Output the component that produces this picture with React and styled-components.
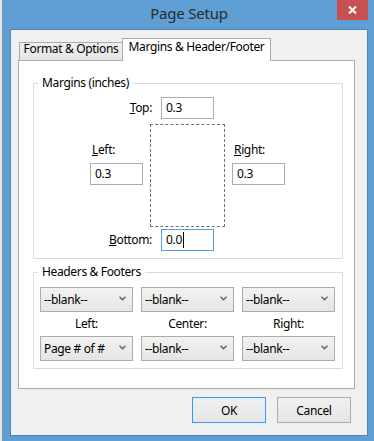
import React from "react";
import styled, { createGlobalStyle } from "styled-components";

const GlobalStyle = createGlobalStyle`
  html, body { margin: 0; padding: 0; }
  body {
    width: 374px;
    height: 441px;
    overflow: hidden;
    font-family: "Noto Sans", "DejaVu Sans", sans-serif;
    font-size: 12px;
    letter-spacing: -0.35px;
    color: #000;
  }
  *, *::before, *::after { box-sizing: border-box; }
`;

const Desktop = styled.div`
  display: flex;
  width: 374px;
  height: 441px;
  padding-left: 2px;
  background: #e4e4e4;
`;

const Window = styled.div`
  flex: 1;
  display: flex;
  flex-direction: column;
  background: #5f9fd3;
  border-left: 1px solid #7d9bb6;
  padding: 0 6px 5px 7px;
`;

const TitleBar = styled.div`
  height: 29px;
  display: grid;
  grid-template-columns: 1fr auto 1fr;
  align-items: start;
`;

const Title = styled.div`
  grid-column: 2;
  padding-top: 3px;
  font-size: 15px;
  line-height: 20px;
  letter-spacing: -0.2px;
  color: #2b2b2b;
`;

const CloseButton = styled.div`
  grid-column: 3;
  justify-self: end;
  width: 31px;
  height: 20px;
  background: #c75050;
  display: flex;
  align-items: center;
  justify-content: center;
`;

const Client = styled.div`
  flex: 1;
  display: flex;
  flex-direction: column;
  background: #f0f0f0;
  border: 1px solid #4f86b6;
  padding: 8px 12px 12px 7px;
`;

const TabStrip = styled.div`
  display: flex;
  align-items: flex-end;
  height: 22px;
  padding-left: 1px;
`;

const Tab = styled.div`
  position: relative;
  text-align: center;
  white-space: nowrap;
  line-height: 12px;
  border: 1px solid #acacac;
  border-bottom: none;
  width: ${(p) => (p.$active ? "149px" : "104px")};
  height: ${(p) => (p.$active ? "23px" : "18px")};
  padding-top: ${(p) => (p.$active ? "2px" : "0")};
  margin-left: ${(p) => (p.$active ? "-1px" : "0")};
  margin-bottom: ${(p) => (p.$active ? "-1px" : "0")};
  background: ${(p) => (p.$active ? "#fff" : "linear-gradient(#f0f0f0, #e5e5e5)")};
  z-index: ${(p) => (p.$active ? 1 : 0)};
`;

const Panel = styled.div`
  width: 337px;
  height: 329px;
  background: #fff;
  border: 1px solid #acacac;
  padding: 14px 11px 0 14px;
  display: flex;
  flex-direction: column;
  gap: 5px;
`;

const Group = styled.fieldset`
  margin: 0;
  padding: 0 0 7px 0;
  min-width: 0;
  border: 1px solid #dcdcdc;
`;

const Legend = styled.legend`
  margin-left: 4px;
  padding: 0 4px;
  line-height: 16px;
`;

const FieldRow = styled.div`
  display: flex;
  align-items: center;
  padding-left: 56px;
  margin-top: ${(p) => p.$top}px;
`;

const RowLabel = styled.div`
  width: 62px;
  margin-right: 9px;
  text-align: right;
  line-height: 16px;
`;

const TextBox = styled.div`
  width: 53px;
  height: 22px;
  background: #fff;
  border: 1px solid ${(p) => (p.$focused ? "#569de5" : "#abadb3")};
  padding-left: 4px;
  line-height: 20px;
  display: flex;
  align-items: center;
`;

const Caret = styled.span`
  display: inline-block;
  width: 1px;
  height: 16px;
  background: #000;
  margin-left: 1px;
`;

const PreviewRow = styled.div`
  display: flex;
  gap: 7px;
  padding-left: 56px;
  margin-top: 5px;
`;

const SideCol = styled.div`
  display: flex;
  flex-direction: column;
  gap: 5px;
  padding-top: 18px;
`;

const SideLabel = styled.div`
  padding-left: 2px;
  line-height: 16px;
`;

const PagePreview = styled.div`
  width: 75px;
  height: 103px;
  border: 1px dashed #707070;
`;

const ComboGrid = styled.div`
  display: grid;
  grid-template-columns: repeat(3, 93px);
  grid-template-rows: 25px 24px 25px;
  column-gap: 8px;
  padding: 7px 0 0 6px;
`;

const Combo = styled.div`
  display: flex;
  align-items: center;
  justify-content: space-between;
  border: 1px solid #acacac;
  background: linear-gradient(#f2f2f2, #e5e5e5);
  padding: 0 6px 0 3px;
  white-space: nowrap;
`;

const Chevron = styled.svg`
  display: block;
  margin-bottom: 3px;
`;

const ColLabel = styled.div`
  align-self: center;
  text-align: center;
  line-height: 16px;
`;

const Footer = styled.div`
  display: flex;
  justify-content: flex-end;
  gap: 11px;
  margin-top: 8px;
  padding-right: 4px;
`;

const Button = styled.div`
  width: 74px;
  height: 26px;
  display: flex;
  align-items: center;
  justify-content: center;
  border: 1px solid ${(p) => (p.$default ? "#3399ff" : "#acacac")};
  background: linear-gradient(#f0f0f0, #e5e5e5);
`;

function ComboBox({ value }) {
  return (
    <Combo>
      <span>{value}</span>
      <Chevron width="7" height="5" viewBox="0 0 7 5">
        <polyline points="0.5,0.8 3.5,3.8 6.5,0.8" fill="none" stroke="#606060" strokeWidth="1.4" />
      </Chevron>
    </Combo>
  );
}

export default function App() {
  return (
    <>
      <GlobalStyle />
      <Desktop>
        <Window>
          <TitleBar>
            <Title>Page Setup</Title>
            <CloseButton>
              <svg width="9" height="8" viewBox="0 0 9 8">
                <path d="M1 0.5 L8 7.5 M8 0.5 L1 7.5" stroke="#fff" strokeWidth="2" />
              </svg>
            </CloseButton>
          </TitleBar>
          <Client>
            <TabStrip>
              <Tab>Format &amp; Options</Tab>
              <Tab $active>Margins &amp; Header/Footer</Tab>
            </TabStrip>
            <Panel>
              <Group>
                <Legend>Margins (inches)</Legend>
                <FieldRow $top={6}>
                  <RowLabel><u>T</u>op:</RowLabel>
                  <TextBox>0.3</TextBox>
                </FieldRow>
                <PreviewRow>
                  <SideCol>
                    <SideLabel><u>L</u>eft:</SideLabel>
                    <TextBox>0.3</TextBox>
                  </SideCol>
                  <PagePreview />
                  <SideCol>
                    <SideLabel><u>R</u>ight:</SideLabel>
                    <TextBox>0.3</TextBox>
                  </SideCol>
                </PreviewRow>
                <FieldRow $top={2}>
                  <RowLabel><u>B</u>ottom:</RowLabel>
                  <TextBox $focused>0.0<Caret /></TextBox>
                </FieldRow>
              </Group>
              <Group>
                <Legend>Headers &amp; Footers</Legend>
                <ComboGrid>
                  <ComboBox value="--blank--" />
                  <ComboBox value="--blank--" />
                  <ComboBox value="--blank--" />
                  <ColLabel>Left:</ColLabel>
                  <ColLabel>Center:</ColLabel>
                  <ColLabel>Right:</ColLabel>
                  <ComboBox value="Page # of #" />
                  <ComboBox value="--blank--" />
                  <ComboBox value="--blank--" />
                </ComboGrid>
              </Group>
            </Panel>
            <Footer>
              <Button $default>OK</Button>
              <Button>Cancel</Button>
            </Footer>
          </Client>
        </Window>
      </Desktop>
    </>
  );
}
